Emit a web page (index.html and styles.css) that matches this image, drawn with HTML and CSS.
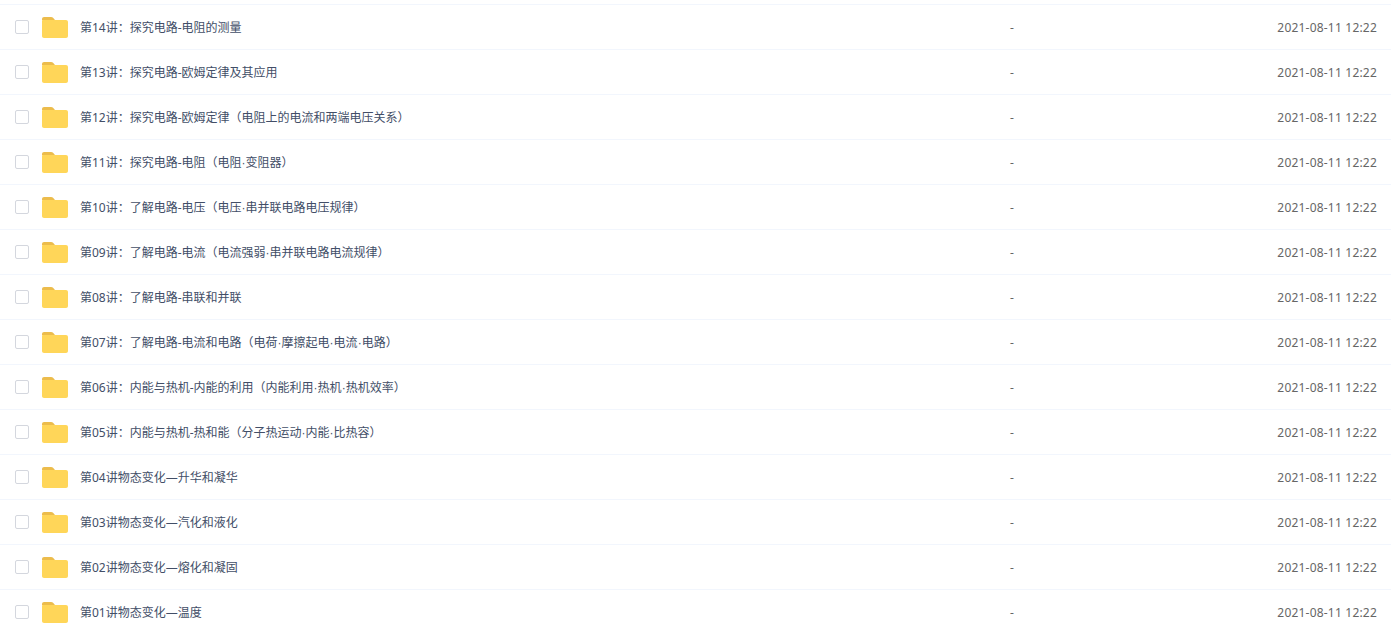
FILE: index.html
```html
<!DOCTYPE html>
<html>

<head>
    <meta charset="utf-8">
    <link rel="stylesheet" href="styles.css">
</head>

<body>
    <svg class="defs" width="0" height="0">
        <symbol id="folder" viewBox="0 0 26 21">
            <path d="M0 2C0 .9.9 0 2 0h7c1 0 1.700.4 2.300 1L13 3H0z" fill="#ecbc4c" />
            <path d="M0 4c0-.6.400-1 1-1h23c1.100 0 2 .9 2 2v14c0 1.100-.9 2-2 2H2c-1.100 0-2-.9-2-2z" fill="#ffd659" />
        </symbol>
    </svg>

    <div class="file-list">
        <div class="row"><span class="check"></span><svg class="folder"><use href="#folder" /></svg><span class="name">第14讲：探究电路-电阻的测量</span><span class="size">-</span><span class="time">2021-08-11 12:22</span></div>
        <div class="row"><span class="check"></span><svg class="folder"><use href="#folder" /></svg><span class="name">第13讲：探究电路-欧姆定律及其应用</span><span class="size">-</span><span class="time">2021-08-11 12:22</span></div>
        <div class="row"><span class="check"></span><svg class="folder"><use href="#folder" /></svg><span class="name">第12讲：探究电路-欧姆定律（电阻上的电流和两端电压关系）</span><span class="size">-</span><span class="time">2021-08-11 12:22</span></div>
        <div class="row"><span class="check"></span><svg class="folder"><use href="#folder" /></svg><span class="name">第11讲：探究电路-电阻（电阻<span class="dot">·</span>变阻器）</span><span class="size">-</span><span class="time">2021-08-11 12:22</span></div>
        <div class="row"><span class="check"></span><svg class="folder"><use href="#folder" /></svg><span class="name">第10讲：了解电路-电压（电压<span class="dot">·</span>串并联电路电压规律）</span><span class="size">-</span><span class="time">2021-08-11 12:22</span></div>
        <div class="row"><span class="check"></span><svg class="folder"><use href="#folder" /></svg><span class="name">第09讲：了解电路-电流（电流强弱<span class="dot">·</span>串并联电路电流规律）</span><span class="size">-</span><span class="time">2021-08-11 12:22</span></div>
        <div class="row"><span class="check"></span><svg class="folder"><use href="#folder" /></svg><span class="name">第08讲：了解电路-串联和并联</span><span class="size">-</span><span class="time">2021-08-11 12:22</span></div>
        <div class="row"><span class="check"></span><svg class="folder"><use href="#folder" /></svg><span class="name">第07讲：了解电路-电流和电路（电荷<span class="dot">·</span>摩擦起电<span class="dot">·</span>电流<span class="dot">·</span>电路）</span><span class="size">-</span><span class="time">2021-08-11 12:22</span></div>
        <div class="row"><span class="check"></span><svg class="folder"><use href="#folder" /></svg><span class="name">第06讲：内能与热机-内能的利用（内能利用<span class="dot">·</span>热机<span class="dot">·</span>热机效率）</span><span class="size">-</span><span class="time">2021-08-11 12:22</span></div>
        <div class="row"><span class="check"></span><svg class="folder"><use href="#folder" /></svg><span class="name">第05讲：内能与热机-热和能（分子热运动<span class="dot">·</span>内能<span class="dot">·</span>比热容）</span><span class="size">-</span><span class="time">2021-08-11 12:22</span></div>
        <div class="row"><span class="check"></span><svg class="folder"><use href="#folder" /></svg><span class="name">第04讲物态变化—升华和凝华</span><span class="size">-</span><span class="time">2021-08-11 12:22</span></div>
        <div class="row"><span class="check"></span><svg class="folder"><use href="#folder" /></svg><span class="name">第03讲物态变化—汽化和液化</span><span class="size">-</span><span class="time">2021-08-11 12:22</span></div>
        <div class="row"><span class="check"></span><svg class="folder"><use href="#folder" /></svg><span class="name">第02讲物态变化—熔化和凝固</span><span class="size">-</span><span class="time">2021-08-11 12:22</span></div>
        <div class="row"><span class="check"></span><svg class="folder"><use href="#folder" /></svg><span class="name">第01讲物态变化—温度</span><span class="size">-</span><span class="time">2021-08-11 12:22</span></div>
    </div>
</body>

</html>
```

FILE: styles.css
```css
html,
body {
    margin: 0;
    height: 100%;
    overflow: hidden;
    background-color: #fff;
}

body {
    font-family: "Noto Sans", "Noto Sans CJK SC", sans-serif;
    font-size: 12px;
}

.defs {
    display: block;
    height: 0;
}

.file-list {
    padding-top: 4px;
}

.file-list::before {
    content: "";
    display: block;
    border-top: 1px solid #f2f6fd;
}

.row {
    display: flex;
    align-items: center;
    height: 44px;
    border-bottom: 1px solid #f2f6fd;
}

.check {
    flex: none;
    width: 12px;
    height: 12px;
    margin-left: 15px;
    border: 1px solid #d4d7de;
    border-radius: 2px;
}

.folder {
    flex: none;
    width: 26px;
    height: 21px;
    margin-left: 13px;
}

.name {
    flex: none;
    width: 930px;
    margin-left: 12px;
    color: #424e67;
}

/* the separator dot is a bit wider than the Noto one */
.dot {
    font-family: "Liberation Sans", sans-serif;
}

.size {
    flex: none;
    color: #666;
}

.time {
    margin-left: auto;
    margin-right: 14px;
    color: #666;
    letter-spacing: 0.2px;
}
```
